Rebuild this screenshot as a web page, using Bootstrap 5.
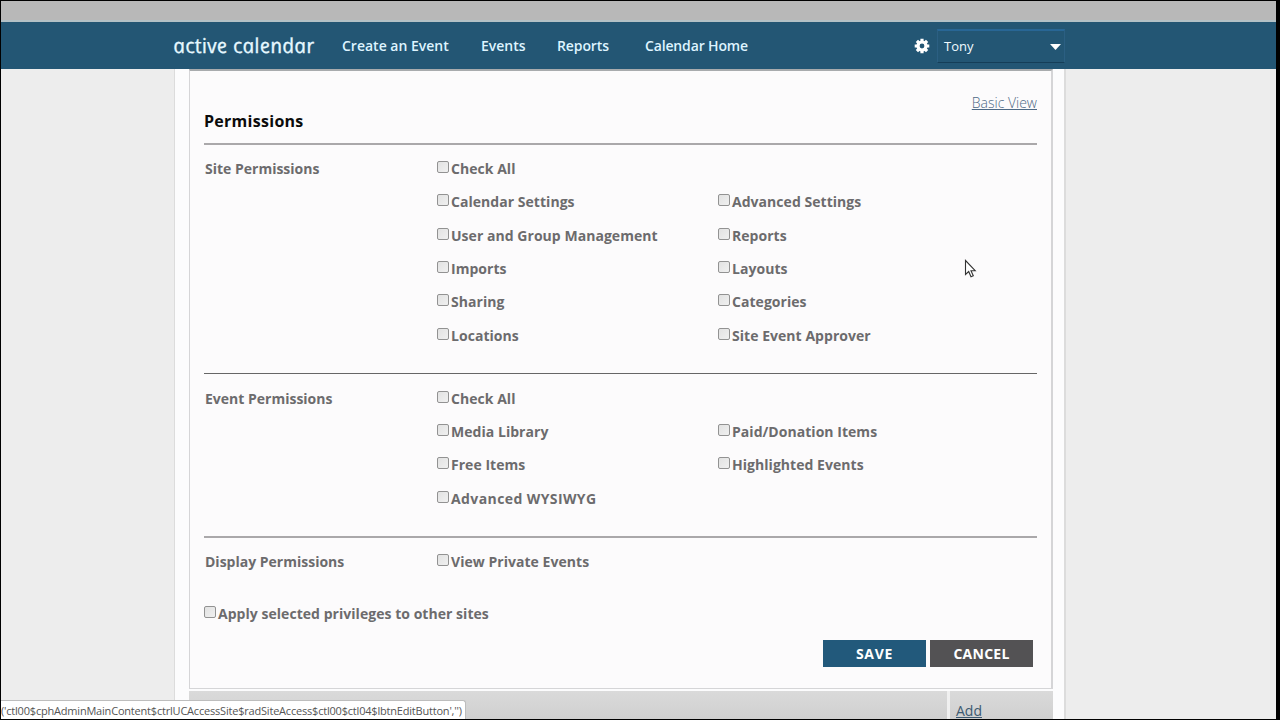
<!DOCTYPE html>
<html lang="en">
<head>
<meta charset="utf-8">
<title>Active Calendar - Permissions</title>
<link href="https://cdn.jsdelivr.net/npm/bootstrap@5.3.0/dist/css/bootstrap.min.css" rel="stylesheet">
<style>
body{font-family:"Open Sans","Noto Sans",sans-serif;font-size:14px;background:#000;height:720px;overflow:hidden}
.screen{width:1275px;height:718px;margin:1px 0 0 1px;background:#ededed;overflow:hidden}
.chrome-strip{height:21px;background:#b8b8b8;border-bottom:2px solid #b3c1c6}
.topnav{height:47px;background:#235674;padding:0;color:#e6f8ff}
.topnav-in{width:893px;height:47px;margin-left:173px}
.brand-name{font-style:italic;font-size:20.5px;line-height:47px;width:168px;color:#e6f8ff;letter-spacing:.25px;-webkit-text-stroke:.3px #e6f8ff;transform:skewX(12deg);transform-origin:50% 60%;white-space:nowrap}
.topnav .nav-link{padding:0;color:#def4ff;font-weight:600;line-height:47px;font-size:14px;white-space:nowrap}
.l1{width:139px}.l2{width:76px}.l3{width:88px;letter-spacing:-.1px}.l4{width:269px;letter-spacing:-.15px}
.account{width:128px;height:34px;margin-left:7px;border:1px solid #2b5f82;border-bottom-color:#153e58;border-top:2px solid #286695;font-size:13px;color:#f1faff;padding:2px 3px 0 6px}
.sheet{width:892px;height:650px;margin-left:173px;padding:0 11px 0 14px;background:#fcfcfd;border:solid #dcdcdc;border-width:0 2px 0 1px}
.panel{height:620px;padding:0 14px;background:#fcfbfc;border:solid #d5d5d7;border-width:0 2px 1px 1px;border-top:2px solid #a8abad}
.basic{height:48px;padding-top:20px;line-height:24px}
a.plain{color:#4d6985;font-weight:300;text-decoration:underline;text-underline-offset:1px}
h1{font-size:16px;font-weight:700;color:#0b0b0b;margin:-10px 0 0;height:34px;line-height:24px;letter-spacing:.28px}
.perm{display:grid;grid-template-columns:233px 281px 1fr;grid-template-rows:32.7px;grid-auto-rows:33.4px;font-weight:700;color:#6c6b6d;align-items:center;align-content:start;padding-left:1px;border-top:2px solid #aaa8aa;letter-spacing:.04px}
.site{height:230px;padding-top:7.3px}.event{height:163px;border-top:1px solid #666;padding-top:8px}.disp{height:52px;padding-top:7.5px}
.rowlab{grid-column:1;letter-spacing:0}.c2{grid-column:2}.c3{grid-column:3}
.tick{white-space:nowrap;display:flex;align-items:center}
.wide{letter-spacing:.4px}
.tick input{appearance:none;width:12px;height:12px;border:1px solid #929292;border-radius:2px;background:linear-gradient(135deg,#e2e2e2,#f0f0f0);margin:0 2px 3px -1px;flex:none}
.apply{height:33px;margin:9px 0 0 1px;font-weight:700;color:#6c6b6d;letter-spacing:.04px}
.act{width:103px;height:27px;border:0;border-radius:0;padding:0;color:#fff;font-weight:700;font-size:14px;line-height:27px;letter-spacing:.25px}
.save{background:#22597b;letter-spacing:.7px}.cancel{background:#535254}
.acts{gap:4px;padding-right:4px;margin-top:10px}
.tablefoot{height:30px;margin-top:2px;background:linear-gradient(#dadada,#cfcfcf)}
.addcell{width:106px;border-left:3px solid #f0f0f0;padding:8px 0 0 6px;line-height:24px}
.addcell a.plain{color:#3c5971;font-weight:400}
.status{position:absolute;left:1px;top:700px;width:465px;height:19px;background:#fff;border:1px solid #bdbdbd;border-left:0;border-bottom:0;border-radius:0 3px 0 0;font-size:11px;letter-spacing:-.2px;line-height:19px;color:#555;white-space:nowrap}
.pointer{position:absolute;left:964px;top:259px}
</style>
</head>
<body>
<div class="screen">
  <div class="chrome-strip"></div>
  <nav class="navbar topnav">
    <div class="topnav-in d-flex align-items-center">
      <div class="brand-name">active calendar</div>
      <a class="nav-link l1"><span>Create an Event</span></a>
      <a class="nav-link l2"><span>Events</span></a>
      <a class="nav-link l3"><span>Reports</span></a>
      <a class="nav-link l4"><span>Calendar Home</span></a>
      <svg width="16" height="16" viewBox="-8 -8 16 16" fill="none" stroke="#fff"><circle r="4" stroke-width="3.2"/><path stroke-width="3.2" d="M0-7.3V-4M0 4V7.3M-7.3 0H-4M4 0H7.3M-5.1-5.1L-3-3M3 3L5.1 5.1M-5.1 5.1L-3 3M3-3L5.1-5.1"/></svg>
      <div class="account d-flex align-items-center justify-content-between"><span>Tony</span>
        <svg width="11" height="6"><path d="M0 0H11L5.5 6z" fill="#fff"/></svg></div>
    </div>
  </nav>
  <main class="sheet">
    <section class="panel">
      <div class="basic text-end"><a class="plain" href="#">Basic View</a></div>
      <h1><span>Permissions</span></h1>
      <div class="perm site">
        <div class="rowlab"><span>Site Permissions</span></div>
        <label class="tick c2"><input type="checkbox"><span>Check All</span></label>
        <label class="tick c2"><input type="checkbox"><span>Calendar Settings</span></label>
        <label class="tick c3"><input type="checkbox"><span>Advanced Settings</span></label>
        <label class="tick c2"><input type="checkbox"><span>User and Group Management</span></label>
        <label class="tick c3"><input type="checkbox"><span>Reports</span></label>
        <label class="tick c2"><input type="checkbox"><span>Imports</span></label>
        <label class="tick c3"><input type="checkbox"><span>Layouts</span></label>
        <label class="tick c2"><input type="checkbox"><span>Sharing</span></label>
        <label class="tick c3"><input type="checkbox"><span>Categories</span></label>
        <label class="tick c2"><input type="checkbox"><span>Locations</span></label>
        <label class="tick c3"><input type="checkbox"><span>Site Event Approver</span></label>
      </div>
      <div class="perm event">
        <div class="rowlab"><span>Event Permissions</span></div>
        <label class="tick c2"><input type="checkbox"><span>Check All</span></label>
        <label class="tick c2"><input type="checkbox"><span>Media Library</span></label>
        <label class="tick c3"><input type="checkbox"><span>Paid/Donation Items</span></label>
        <label class="tick c2"><input type="checkbox"><span>Free Items</span></label>
        <label class="tick c3"><input type="checkbox"><span>Highlighted Events</span></label>
        <label class="tick c2 wide"><input type="checkbox"><span>Advanced WYSIWYG</span></label>
      </div>
      <div class="perm disp">
        <div class="rowlab"><span>Display Permissions</span></div>
        <label class="tick c2"><input type="checkbox"><span>View Private Events</span></label>
      </div>
      <label class="tick apply"><input type="checkbox"><span>Apply selected privileges to other sites</span></label>
      <div class="acts d-flex justify-content-end">
        <button class="btn act save">SAVE</button><button class="btn act cancel">CANCEL</button>
      </div>
    </section>
    <div class="tablefoot d-flex justify-content-end"><div class="addcell"><a class="plain" href="#">Add</a></div></div>
  </main>
</div>
<div class="status"><span>('ctl00$cphAdminMainContent$ctrlUCAccessSite$radSiteAccess$ctl00$ctl04$lbtnEditButton','')</span></div>
<svg class="pointer" width="13" height="20"><path d="M1.5 1.5V15.5L4.7 12.5L7 17.8L9.3 16.8L7 11.7H11.2z" fill="#fff" stroke="#333" stroke-width="1.1"/></svg>
<script src="https://cdn.jsdelivr.net/npm/bootstrap@5.3.0/dist/js/bootstrap.bundle.min.js"></script>
</body>
</html>
